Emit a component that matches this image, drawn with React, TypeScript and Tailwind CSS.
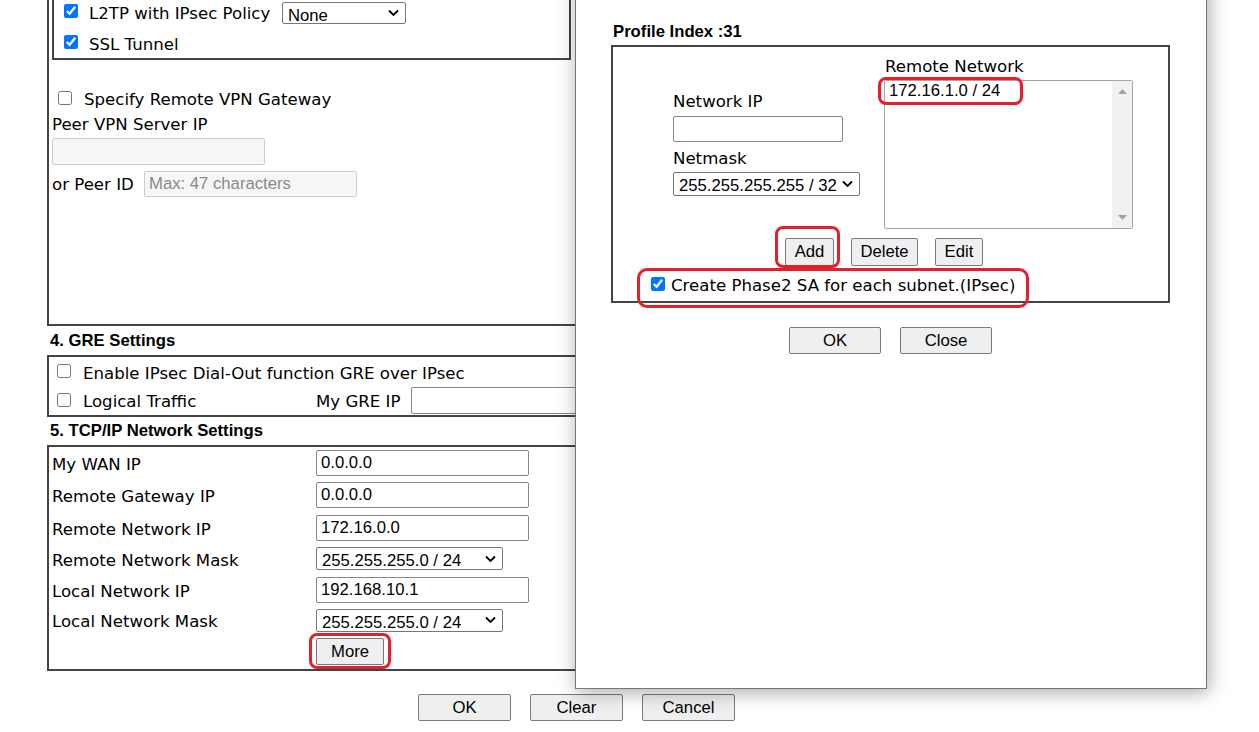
import React from 'react';

const dv = "font-['DejaVu_Sans',Verdana,sans-serif] text-[16.6px] leading-[20px] text-black translate-y-[1px]";
const dv2 = "font-['DejaVu_Sans',Verdana,sans-serif] text-[16.6px] leading-[20px] text-black translate-y-[2px]";
const ar = "font-['Liberation_Sans',Arial,sans-serif] text-[16.7px] text-black";
const mark = 'pointer-events-none absolute border-[3px] border-[#e5202a] rounded-[8px]';

function Tick({ checked = false, className = '' }: { checked?: boolean; className?: string }) {
  return (
    <input
      type="checkbox"
      defaultChecked={checked}
      className={`w-[14px] h-[14px] shrink-0 m-0 accent-[#0075ff] ${className}`}
    />
  );
}

function Dropdown({ value, className = '' }: { value: string; className?: string }) {
  return (
    <div className={`relative shrink-0 ${className}`}>
      <select
        defaultValue={value}
        className={`appearance-none w-full h-full bg-white border border-[#767676] rounded-[2px] pl-[5px] pr-[20px] ${ar}`}
      >
        <option>{value}</option>
      </select>
      <svg
        className="pointer-events-none absolute right-[7px] top-1/2 -translate-y-1/2"
        width="11"
        height="7"
        viewBox="0 0 11 7"
      >
        <path d="M1 1l4.5 4.5L10 1" fill="none" stroke="#000" strokeWidth="1.8" />
      </svg>
    </div>
  );
}

function Field({ value = '', className = '', muted = false, placeholder }: {
  value?: string; className?: string; muted?: boolean; placeholder?: string;
}) {
  return (
    <input
      type="text"
      defaultValue={value}
      placeholder={placeholder}
      className={`shrink-0 rounded-[2px] px-[4px] ${ar} ${
        muted
          ? 'bg-[#f6f6f6] border border-[#cdcdcd] placeholder:text-[#8a8a8a]'
          : 'bg-white border border-[#858585]'
      } ${className}`}
    />
  );
}

function Btn({ label, className = '' }: { label: string; className?: string }) {
  return (
    <button
      type="button"
      className={`shrink-0 bg-[#efefef] border border-[#7a7a7a] rounded-[2px] ${ar} ${className}`}
    >
      {label}
    </button>
  );
}

function Heading({ text, h }: { text: string; h: string }) {
  return (
    <div className={`${h} flex items-center pl-[3px] font-bold ${ar}`}>{text}</div>
  );
}

function RemoteList() {
  return (
    <div className="relative mt-[4px] w-[249px] h-[149px] flex bg-white border border-[#a5a5a5] rounded-[2px]">
      <div className="flex-1 pl-[4px]">
        <div className={`${ar} leading-[19px]`}>172.16.1.0 / 24</div>
      </div>
      <div className="w-[20px] bg-[#f1f1f1] flex flex-col items-center justify-between py-[8px]">
        <svg width="9" height="5" viewBox="0 0 9 5"><polygon points="4.5,0 9,5 0,5" fill="#a3a3a3" /></svg>
        <svg width="9" height="5" viewBox="0 0 9 5"><polygon points="0,0 9,0 4.5,5" fill="#a3a3a3" /></svg>
      </div>
      <span className={`${mark} left-[-7px] top-[-4px] w-[145px] h-[28px]`} />
    </div>
  );
}

function SubnetDialog() {
  return (
    <div className="absolute left-[575px] top-[-20px] w-[632px] h-[709px] bg-white border border-[#777] shadow-[2px_3px_18px_rgba(0,0,0,0.35)] pl-[35px] pr-[36px] pt-[41px]">
      <div className={`h-[20px] leading-[20px] pl-[2px] font-bold ${ar}`}>Profile Index :31</div>

      <div className="mt-[3px] border-2 border-[#444] pb-[6px]">
        <div className="flex">
          <div className="w-[271px] pl-[60px] pt-[44px]">
            <div className={dv}>Network IP</div>
            <Field className="mt-[5px] w-[170px] h-[26px]" />
            <div className={`mt-[6px] ${dv}`}>Netmask</div>
            <Dropdown value="255.255.255.255 / 32" className="mt-[4px] w-[187px] h-[24px]" />
          </div>
          <div className="pt-[9px]">
            <div className={`pl-[1px] ${dv}`}>Remote Network</div>
            <RemoteList />
          </div>
        </div>

        <div className="mt-[9px] flex gap-[17px] pl-[172px]">
          <div className="relative">
            <Btn label="Add" className="w-[49px] h-[28px]" />
            <span className={`${mark} left-[-10px] right-[-6px] top-[-12px] bottom-[-2px]`} />
          </div>
          <Btn label="Delete" className="w-[67px] h-[28px]" />
          <Btn label="Edit" className="w-[48px] h-[28px]" />
        </div>

        <div className="relative mt-[9px] h-[20px] flex items-center pl-[38px]">
          <Tick checked className="mb-[3px]" />
          <span className={`ml-[6px] ${dv}`}>Create Phase2 SA for each subnet.(IPsec)</span>
          <span className={`${mark} left-[24px] w-[392px] top-[-7px] h-[40px] rounded-[10px]`} />
        </div>
      </div>

      <div className="mt-[24px] flex justify-center gap-[19px]">
        <Btn label="OK" className="w-[92px] h-[27px]" />
        <Btn label="Close" className="w-[92px] h-[27px]" />
      </div>
    </div>
  );
}

const tcpRows: { label: string; value: string; kind: 'input' | 'select' }[] = [
  { label: 'My WAN IP', value: '0.0.0.0', kind: 'input' },
  { label: 'Remote Gateway IP', value: '0.0.0.0', kind: 'input' },
  { label: 'Remote Network IP', value: '172.16.0.0', kind: 'input' },
  { label: 'Remote Network Mask', value: '255.255.255.0 / 24', kind: 'select' },
  { label: 'Local Network IP', value: '192.168.10.1', kind: 'input' },
  { label: 'Local Network Mask', value: '255.255.255.0 / 24', kind: 'select' },
];

export default function App() {
  return (
    <div className="relative w-[1259px] h-[732px] overflow-hidden bg-white">
      <div className="ml-[47px] mt-[-7px] w-[1059px]">
        {/* 3. dial-out types (scrolled partly off screen) */}
        <div className="border-2 border-[#444] pl-[3px] pb-[127px]">
          <div className="w-[519px] border-2 border-[#444]">
            <div className="h-[31px] flex items-center pl-[10px]">
              <Tick checked className="mb-[3px]" />
              <span className={`ml-[11px] w-[193px] ${dv}`}>L2TP with IPsec Policy</span>
              <Dropdown value="None" className="w-[124px] h-[22px]" />
            </div>
            <div className="h-[30px] flex items-center pl-[10px]">
              <Tick checked className="mb-[2px]" />
              <span className={`ml-[11px] ${dv2}`}>SSL Tunnel</span>
            </div>
          </div>

          <div className="mt-[29px] h-[20px] flex items-center pl-[6px]">
            <Tick className="mb-[3px]" />
            <span className={`ml-[12px] ${dv}`}>Specify Remote VPN Gateway</span>
          </div>
          <div className={`mt-[5px] ${dv}`}>Peer VPN Server IP</div>
          <Field muted className="mt-[4px] w-[213px] h-[27px] block" />
          <div className="mt-[6px] h-[26px] flex items-center">
            <span className={`w-[92px] ${dv}`}>or Peer ID</span>
            <Field muted placeholder="Max: 47 characters" className="w-[213px] h-[26px]" />
          </div>
        </div>

        {/* 4. GRE */}
        <Heading text="4. GRE Settings" h="h-[29px]" />
        <div className="border-2 border-[#444] pt-[2px] pb-[1px] pl-[8px]">
          <div className="h-[27px] flex items-center">
            <Tick className="mb-[3px]" />
            <span className={`ml-[12px] ${dv}`}>Enable IPsec Dial-Out function GRE over IPsec</span>
          </div>
          <div className="h-[28px] flex items-center">
            <div className="w-[259px] flex items-center">
              <Tick className="mb-[1px]" />
              <span className={`ml-[12px] ${dv2}`}>Logical Traffic</span>
            </div>
            <span className={`w-[95px] ${dv2}`}>My GRE IP</span>
            <Field className="w-[213px] h-[27px]" />
          </div>
        </div>

        {/* 5. TCP/IP */}
        <Heading text="5. TCP/IP Network Settings" h="h-[28px]" />
        <div className="border-2 border-[#444] pt-[3px] pb-[4px] pl-[3px]">
          <div className="grid grid-cols-[264px_auto] gap-y-[6.4px] items-center">
            {tcpRows.map((r) => (
              <React.Fragment key={r.label}>
                <span className={dv2}>{r.label}</span>
                {r.kind === 'input' ? (
                  <Field value={r.value} className="w-[213px] h-[26px]" />
                ) : (
                  <Dropdown value={r.value} className="w-[187px] h-[23px]" />
                )}
              </React.Fragment>
            ))}
            <span />
            <div className="relative w-[68px]">
              <Btn label="More" className="w-[68px] h-[27px]" />
              <span className={`${mark} left-[-7px] top-[-5px] w-[82px] h-[36px]`} />
            </div>
          </div>
        </div>

        <div className="mt-[23px] flex justify-center gap-[19px]">
          <Btn label="OK" className="w-[93px] h-[27px]" />
          <Btn label="Clear" className="w-[93px] h-[27px]" />
          <Btn label="Cancel" className="w-[93px] h-[27px]" />
        </div>
      </div>

      <SubnetDialog />
    </div>
  );
}
